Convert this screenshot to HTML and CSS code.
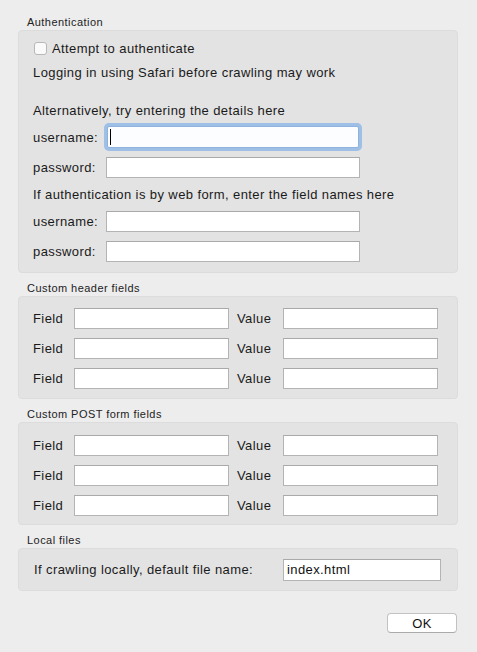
FILE: index.html
```html
<!DOCTYPE html>
<html lang="en">
<head>
  <meta charset="UTF-8">
  <meta name="viewport" content="width=device-width, initial-scale=1.0">
  <title>Crawler settings</title>
  <link rel="stylesheet" href="styles.css">
</head>
<body>

  <div class="dialog">

    <div class="section">
      <div class="section-title">Authentication</div>
      <div class="box auth-box">
        <label class="row text-row check-row">
          <input type="checkbox" class="check">
          <span>Attempt to authenticate</span>
        </label>
        <div class="row text-row">Logging in using Safari before crawling may work</div>
        <div class="spacer"></div>
        <div class="row text-row">Alternatively, try entering the details here</div>
        <div class="row input-row">
          <span class="auth-label">username:</span>
          <span class="focus-wrap">
            <input type="text" class="field auth-field focused">
            <span class="caret"></span>
          </span>
        </div>
        <div class="row input-row">
          <span class="auth-label">password:</span>
          <input type="text" class="field auth-field">
        </div>
        <div class="row text-row">If authentication is by web form, enter the field names here</div>
        <div class="row input-row">
          <span class="auth-label">username:</span>
          <input type="text" class="field auth-field">
        </div>
        <div class="row input-row">
          <span class="auth-label">password:</span>
          <input type="text" class="field auth-field">
        </div>
      </div>
    </div>

    <div class="section">
      <div class="section-title">Custom header fields</div>
      <div class="box pair-box">
        <div class="pair-row">
          <span>Field</span><input type="text" class="field pair-field">
          <span>Value</span><input type="text" class="field pair-field">
        </div>
        <div class="pair-row">
          <span>Field</span><input type="text" class="field pair-field">
          <span>Value</span><input type="text" class="field pair-field">
        </div>
        <div class="pair-row">
          <span>Field</span><input type="text" class="field pair-field">
          <span>Value</span><input type="text" class="field pair-field">
        </div>
      </div>
    </div>

    <div class="section">
      <div class="section-title">Custom POST form fields</div>
      <div class="box pair-box post-box">
        <div class="pair-row">
          <span>Field</span><input type="text" class="field pair-field">
          <span>Value</span><input type="text" class="field pair-field">
        </div>
        <div class="pair-row">
          <span>Field</span><input type="text" class="field pair-field">
          <span>Value</span><input type="text" class="field pair-field">
        </div>
        <div class="pair-row">
          <span>Field</span><input type="text" class="field pair-field">
          <span>Value</span><input type="text" class="field pair-field">
        </div>
      </div>
    </div>

    <div class="section">
      <div class="section-title">Local files</div>
      <div class="box local-box">
        <span class="local-label">If crawling locally, default file name:</span>
        <input type="text" class="field local-field" value="index.html">
      </div>
    </div>

    <div class="buttons">
      <button class="ok-button">OK</button>
    </div>

  </div>

</body>
</html>
```

FILE: styles.css
```css
* {
  margin: 0;
  padding: 0;
  box-sizing: border-box;
  font-family: "Liberation Sans", Arial, sans-serif;
  letter-spacing: 0.4px;
}

body {
  background-color: #ededed;
  color: #1a1a1a;
  font-size: 13px;
}

.dialog {
  width: 477px;
  padding: 7px 19px 0 18px;
}

.section {
  margin-top: 8px;
}

.section-title {
  font-size: 11px;
  line-height: 15px;
  height: 15px;
  padding-left: 9px;
  color: #222;
  letter-spacing: 0.45px;
}

.box {
  background-color: #e3e3e3;
  border: 1px solid #dcdcdc;
  border-radius: 4px;
}

/* authentication box */
.auth-box {
  height: 243px;
  padding: 5px 14px 0 14px;
}

.row {
  display: flex;
  align-items: center;
}

.text-row {
  height: 24px;
}

.input-row {
  height: 30px;
}

.spacer {
  height: 14px;
}

.check-row {
  gap: 5px;
  margin-left: 1px;
}

.check {
  appearance: none;
  width: 13px;
  height: 13px;
  background-color: #fafafa;
  border: 1px solid #b8b8b8;
  border-radius: 3px;
  margin-top: 1px;
}

.auth-label {
  width: 73px;
}

.field {
  height: 21px;
  background-color: #fff;
  border: 1px solid #b4b4b4;
  border-top-color: #a9a9a9;
  font-size: 13px;
  padding: 0 3px;
  outline: none;
  color: #111;
}

.auth-field {
  width: 254px;
}

.focus-wrap {
  position: relative;
  display: flex;
}

.focused {
  background-color: #fbfdff;
  border-color: #8fb3dc;
  box-shadow: 0 0 0 3px #9ebfe6;
  border-radius: 2px;
  width: 252px;
  margin-left: 1px;
  height: 22px;
}

.caret {
  position: absolute;
  left: 4px;
  top: 3px;
  width: 1px;
  height: 16px;
  background-color: #000;
}

/* field / value boxes */
.pair-box {
  height: 103px;
  padding: 6px 0 0 14px;
}

.post-box {
  padding-top: 7px;
}

.pair-row {
  display: grid;
  grid-template-columns: 41px 155px 54px 155px;
  align-items: center;
  height: 30px;
}

.pair-row span:nth-of-type(2) {
  padding-left: 8px;
}

.pair-field {
  width: 155px;
  height: 21px;
}

/* local files */
.local-box {
  height: 43px;
  display: flex;
  align-items: center;
  padding-left: 15px;
}

.local-label {
  width: 249px;
}

.local-field {
  width: 158px;
  height: 22px;
}

.buttons {
  display: flex;
  justify-content: flex-end;
  margin-top: 22px;
  padding-right: 1px;
}

.ok-button {
  width: 70px;
  height: 20px;
  background-color: #fff;
  border: 1px solid #c2c2c2;
  border-bottom-color: #aaa;
  border-radius: 4px;
  font-size: 13px;
  color: #111;
}
```
